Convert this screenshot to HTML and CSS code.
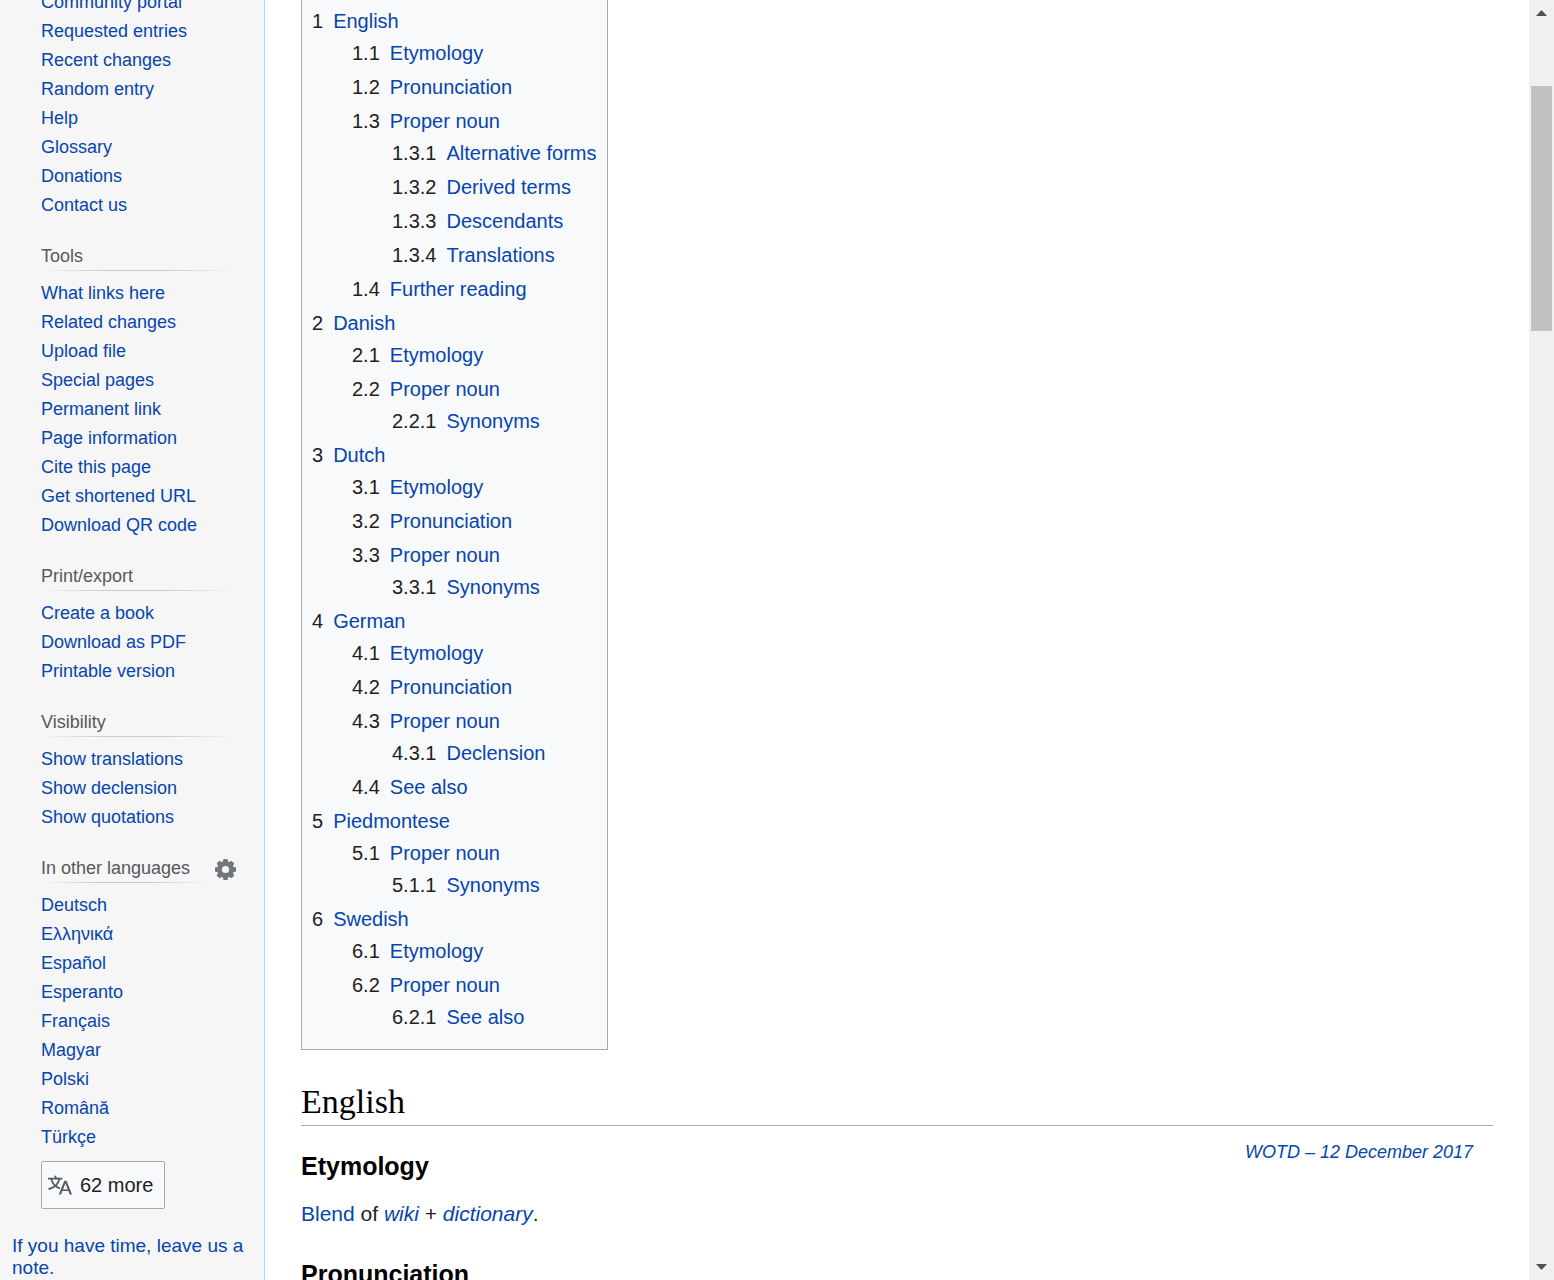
FILE: index.html
```html
<!DOCTYPE html>
<html lang="en">
<head>
<meta charset="utf-8">
<title>Wiktionary entry</title>
<link rel="stylesheet" href="styles.css">
</head>
<body>
<div class="page">
  <div class="sidebar">
    <nav class="portal portal-first" aria-label="Navigation">
      <ul>
        <li><a href="#">Community portal</a></li>
        <li><a href="#">Requested entries</a></li>
        <li><a href="#">Recent changes</a></li>
        <li><a href="#">Random entry</a></li>
        <li><a href="#">Help</a></li>
        <li><a href="#">Glossary</a></li>
        <li><a href="#">Donations</a></li>
        <li><a href="#">Contact us</a></li>
      </ul>
    </nav>
    <nav class="portal" aria-labelledby="p-tools">
      <h3 id="p-tools">Tools</h3>
      <ul>
        <li><a href="#">What links here</a></li>
        <li><a href="#">Related changes</a></li>
        <li><a href="#">Upload file</a></li>
        <li><a href="#">Special pages</a></li>
        <li><a href="#">Permanent link</a></li>
        <li><a href="#">Page information</a></li>
        <li><a href="#">Cite this page</a></li>
        <li><a href="#">Get shortened URL</a></li>
        <li><a href="#">Download QR code</a></li>
      </ul>
    </nav>
    <nav class="portal" aria-labelledby="p-print">
      <h3 id="p-print">Print/export</h3>
      <ul>
        <li><a href="#">Create a book</a></li>
        <li><a href="#">Download as PDF</a></li>
        <li><a href="#">Printable version</a></li>
      </ul>
    </nav>
    <nav class="portal" aria-labelledby="p-visibility">
      <h3 id="p-visibility">Visibility</h3>
      <ul>
        <li><a href="#">Show translations</a></li>
        <li><a href="#">Show declension</a></li>
        <li><a href="#">Show quotations</a></li>
      </ul>
    </nav>
    <nav class="portal portal-lang" aria-labelledby="p-lang">
      <div class="lang-head">
        <h3 id="p-lang">In other languages</h3>
        <button class="gear" type="button" aria-label="Language settings">
          <svg viewBox="-10.5 -10.5 21 21" width="21" height="21" aria-hidden="true">
            <circle r="5.9" fill="none" stroke="#72777d" stroke-width="4.6"/>
            <g fill="#72777d">
              <path id="teeth" d="M-3-7-2-10.5H2L3-7ZM-3 7-2 10.5H2L3 7ZM-7-3-10.5-2V2L-7 3ZM7-3 10.5-2V2L7 3Z"/>
              <use href="#teeth" transform="rotate(45)"/>
            </g>
          </svg>
        </button>
      </div>
      <ul>
        <li><a href="#" lang="de">Deutsch</a></li>
        <li><a href="#" lang="el">Ελληνικά</a></li>
        <li><a href="#" lang="es">Español</a></li>
        <li><a href="#" lang="eo">Esperanto</a></li>
        <li><a href="#" lang="fr">Français</a></li>
        <li><a href="#" lang="hu">Magyar</a></li>
        <li><a href="#" lang="pl">Polski</a></li>
        <li><a href="#" lang="ro">Română</a></li>
        <li><a href="#" lang="tr">Türkçe</a></li>
      </ul>
      <button class="more" type="button">
        <svg viewBox="0 0 20 20" width="24" height="24" aria-hidden="true"><path fill="#54595d" d="M20 18h-1.44a.61.61 0 0 1-.4-.12.81.81 0 0 1-.23-.31L17 15h-5l-1 2.54a.77.77 0 0 1-.22.3.59.59 0 0 1-.4.14H9l4.55-11.47h1.89zm-3.53-4.31L14.89 9.5a11.62 11.62 0 0 1-.39-1.24q-.09.37-.19.69l-.19.56-1.58 4.19zm-6.3-1.58a13.43 13.43 0 0 1-2.91-1.41 11.46 11.46 0 0 0 2.81-5.37H12V4H7.31a4 4 0 0 0-.2-.56C6.87 2.79 6.6 2 6.6 2l-1.47.5s.4.89.6 1.5H0v1.33h2.15A11.23 11.23 0 0 0 5 10.7a17.19 17.19 0 0 1-5 2.1q.56.82.87 1.38a23.28 23.28 0 0 0 5.22-2.51 15.64 15.64 0 0 0 3.56 1.77zM3.63 5.33h4.91a8.11 8.11 0 0 1-2.45 4.45 9.11 9.11 0 0 1-2.46-4.45z"/></svg>
        62 more
      </button>
    </nav>
    <p class="feedback"><a href="#">If you have time, leave us a note.</a></p>
  </div>

  <main class="content">
    <nav class="toc" aria-label="Contents">
      <ul>
        <li><span>1</span><a href="#">English</a>
          <ul>
            <li><span>1.1</span><a href="#">Etymology</a></li>
            <li><span>1.2</span><a href="#">Pronunciation</a></li>
            <li><span>1.3</span><a href="#">Proper noun</a>
              <ul>
                <li><span>1.3.1</span><a href="#">Alternative forms</a></li>
                <li><span>1.3.2</span><a href="#">Derived terms</a></li>
                <li><span>1.3.3</span><a href="#">Descendants</a></li>
                <li><span>1.3.4</span><a href="#">Translations</a></li>
              </ul>
            </li>
            <li><span>1.4</span><a href="#">Further reading</a></li>
          </ul>
        </li>
        <li><span>2</span><a href="#">Danish</a>
          <ul>
            <li><span>2.1</span><a href="#">Etymology</a></li>
            <li><span>2.2</span><a href="#">Proper noun</a>
              <ul>
                <li><span>2.2.1</span><a href="#">Synonyms</a></li>
              </ul>
            </li>
          </ul>
        </li>
        <li><span>3</span><a href="#">Dutch</a>
          <ul>
            <li><span>3.1</span><a href="#">Etymology</a></li>
            <li><span>3.2</span><a href="#">Pronunciation</a></li>
            <li><span>3.3</span><a href="#">Proper noun</a>
              <ul>
                <li><span>3.3.1</span><a href="#">Synonyms</a></li>
              </ul>
            </li>
          </ul>
        </li>
        <li><span>4</span><a href="#">German</a>
          <ul>
            <li><span>4.1</span><a href="#">Etymology</a></li>
            <li><span>4.2</span><a href="#">Pronunciation</a></li>
            <li><span>4.3</span><a href="#">Proper noun</a>
              <ul>
                <li><span>4.3.1</span><a href="#">Declension</a></li>
              </ul>
            </li>
            <li><span>4.4</span><a href="#">See also</a></li>
          </ul>
        </li>
        <li><span>5</span><a href="#">Piedmontese</a>
          <ul>
            <li><span>5.1</span><a href="#">Proper noun</a>
              <ul>
                <li><span>5.1.1</span><a href="#">Synonyms</a></li>
              </ul>
            </li>
          </ul>
        </li>
        <li><span>6</span><a href="#">Swedish</a>
          <ul>
            <li><span>6.1</span><a href="#">Etymology</a></li>
            <li><span>6.2</span><a href="#">Proper noun</a>
              <ul>
                <li><span>6.2.1</span><a href="#">See also</a></li>
              </ul>
            </li>
          </ul>
        </li>
      </ul>
    </nav>

    <h2>English</h2>
    <p class="wotd"><a href="#">WOTD – 12 December 2017</a></p>
    <h3>Etymology</h3>
    <p><a href="#">Blend</a> of <i><a href="#">wiki</a></i> + <i><a href="#">dictionary</a></i>.</p>
    <h3>Pronunciation</h3>
  </main>

  <div class="scrollbar" aria-hidden="true">
    <svg viewBox="0 0 11 6" width="11" height="6"><path fill="#505050" d="M0 6 5.500 0 11 6Z"/></svg>
    <div class="track"><div class="thumb"></div></div>
    <svg viewBox="0 0 11 6" width="11" height="6"><path fill="#505050" d="M0 0 5.500 6 11 0Z"/></svg>
  </div>
</div>
</body>
</html>
```
FILE: styles.css
```css
* {
  box-sizing: border-box;
}

body {
  margin: 0;
  background: #fff;
  color: #202122;
  font-family: "Liberation Sans", Arial, sans-serif;
  font-size: 21px;
}

a {
  color: #0645ad;
  text-decoration: none;
}

ul {
  list-style: none;
  margin: 0;
  padding: 0;
}

/* The entry is seen part-way down its scroll */
.page {
  display: flex;
  height: 100vh;
  overflow: hidden;
}

.sidebar {
  flex: 0 0 265px;
  background: #f6f6f6;
  border-right: 1px solid #a7d7f9;
  font-size: 18px;
}

.portal {
  padding: 0 32px 22px 41px;
  line-height: 29px;
}

.portal-first {
  margin-top: -12px;
}

.portal h3 {
  margin: 0 0 8px;
  padding-bottom: 1px;
  color: #54595d;
  font-size: 18px;
  font-weight: 400;
  line-height: 28px;
  background: linear-gradient(to right, transparent, #c8ccd1 33%, #c8ccd1 66%, transparent) bottom / 100% 1px no-repeat;
}

.portal-lang {
  padding: 0 28px 0 41px;
}

.lang-head {
  display: flex;
  align-items: flex-start;
  justify-content: space-between;
}

.lang-head h3 {
  flex: 0 0 168px;
}

.gear {
  display: flex;
  margin: 5px 0 0;
  padding: 0;
  border: 0;
  background: none;
}

.more {
  display: flex;
  align-items: center;
  gap: 8px;
  height: 48px;
  margin-top: 9px;
  padding: 0 11px 0 6px;
  border: 1px solid #a2a9b1;
  border-radius: 2px;
  background: #f8f9fa;
  color: #202122;
  font-family: inherit;
  font-size: 20px;
}

.feedback {
  margin: 26px 12px 0;
  font-size: 19px;
  line-height: 22px;
}

.content {
  flex: 1;
  min-width: 0;
  padding: 0 36px;
}

.toc {
  width: fit-content;
  margin-top: -6px;
  padding: 10px 10px 14px;
  border: 1px solid #a2a9b1;
  background: #f8f9fa;
  font-size: 20px;
  line-height: 32px;
}

.toc li {
  margin-bottom: 2px;
}

.toc li ul {
  padding-left: 40px;
}

.toc span {
  margin-right: 10px;
}

.content h2 {
  margin: 30px 0 0;
  padding-bottom: 2px;
  border-bottom: 1px solid #a2a9b1;
  color: #000;
  font-family: "Liberation Serif", "Times New Roman", serif;
  font-size: 34px;
  font-weight: 400;
  line-height: 43px;
}

.content h3 {
  margin: 0;
  padding-top: 20px;
  color: #000;
  font-size: 25px;
  line-height: 40px;
}

.content p {
  margin: 11px 0 3px;
  line-height: 34px;
}

.content .wotd {
  float: right;
  margin: 9px 20px 0 0;
  font-size: 18px;
  font-style: italic;
}

.scrollbar {
  flex: 0 0 25px;
  display: flex;
  flex-direction: column;
  align-items: center;
  padding: 10px 2px;
  background: #f0f0f0;
}

.track {
  flex: 1;
  display: flex;
  flex-direction: column;
  width: 100%;
  padding-top: 70px;
}

.track::after {
  content: "";
  flex: 19;
}

.thumb {
  flex: 5;
  background: #c1c1c1;
}
```
